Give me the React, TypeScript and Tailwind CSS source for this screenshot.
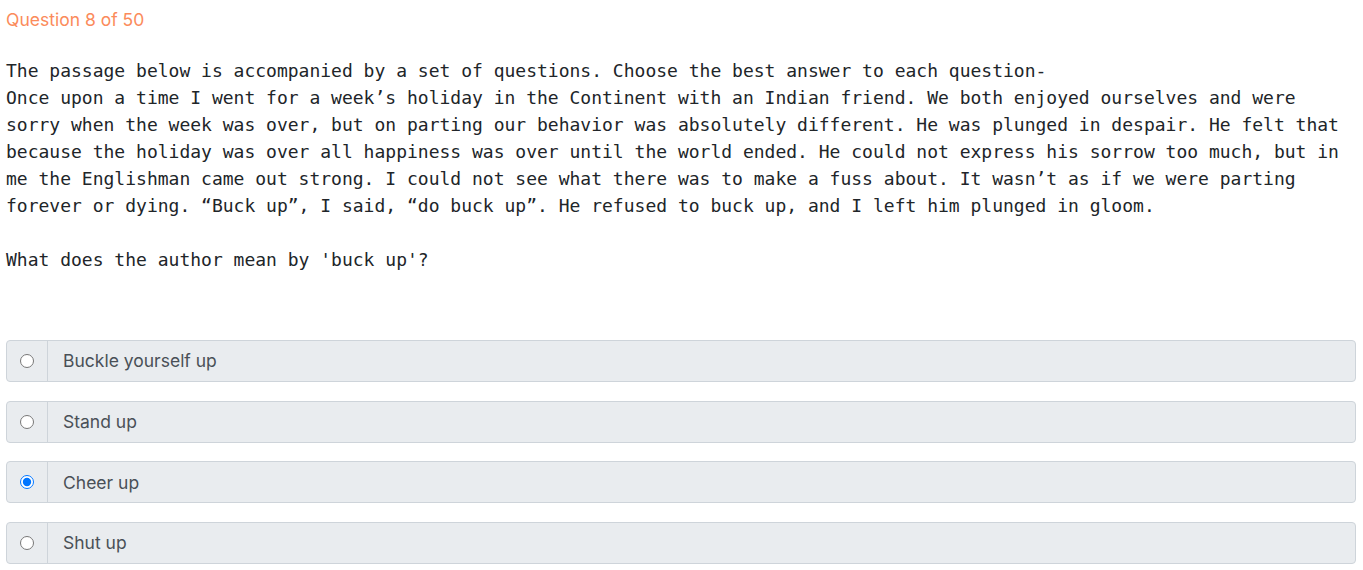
import React, { useState } from "react";

const options = ["Buckle yourself up", "Stand up", "Cheer up", "Shut up"];

export default function App() {
  const [picked, setPicked] = useState(2);

  return (
    <div className="min-h-screen bg-white px-[6px] pt-2 text-[#212529]">
      {/* Header */}
      <div className="h-6 font-['Inter',sans-serif] text-[17.5px] leading-6 text-[#fb8b5b]">Question 8 of 50</div>

      {/* Passage */}
      <div className="mt-[24.5px] font-['DejaVu_Sans_Mono',monospace] text-[18px] leading-[27px] text-[#212529]">
        <p>The passage below is accompanied by a set of questions. Choose the best answer to each question-</p>
        <p>
          Once upon a time I went for a week’s holiday in the Continent with an Indian friend. We both enjoyed
          ourselves and were sorry when the week was over, but on parting our behavior was absolutely different. He
          was plunged in despair. He felt that because the holiday was over all happiness was over until the world
          ended. He could not express his sorrow too much, but in me the Englishman came out strong. I could not see
          what there was to make a fuss about. It wasn’t as if we were parting forever or dying. “Buck up”, I said, “do
          buck up”. He refused to buck up, and I left him plunged in gloom.
        </p>
        <p className="mt-[27px]">What does the author mean by 'buck up'?</p>
      </div>

      {/* Options */}
      <div className="mt-[67.5px] flex flex-col gap-[18.6px] pr-[1px]">
        {options.map((opt, i) => (
          <label
            key={opt}
            className="flex h-[42px] cursor-pointer items-stretch overflow-hidden rounded border border-[#ced4da] bg-[#e9ecef]"
          >
            <span className="flex w-[41px] shrink-0 items-center justify-center border-r border-[#ced4da]">
              <input
                type="radio"
                name="answer"
                checked={picked === i}
                onChange={() => setPicked(i)}
                className="m-0 h-[14px] w-[14px]"
              />
            </span>
            <span className="flex items-center pl-[15px] pt-[1px] font-['Inter',sans-serif] text-[17.5px] text-[#495057]">
              {opt}
            </span>
          </label>
        ))}
      </div>
    </div>
  );
}
